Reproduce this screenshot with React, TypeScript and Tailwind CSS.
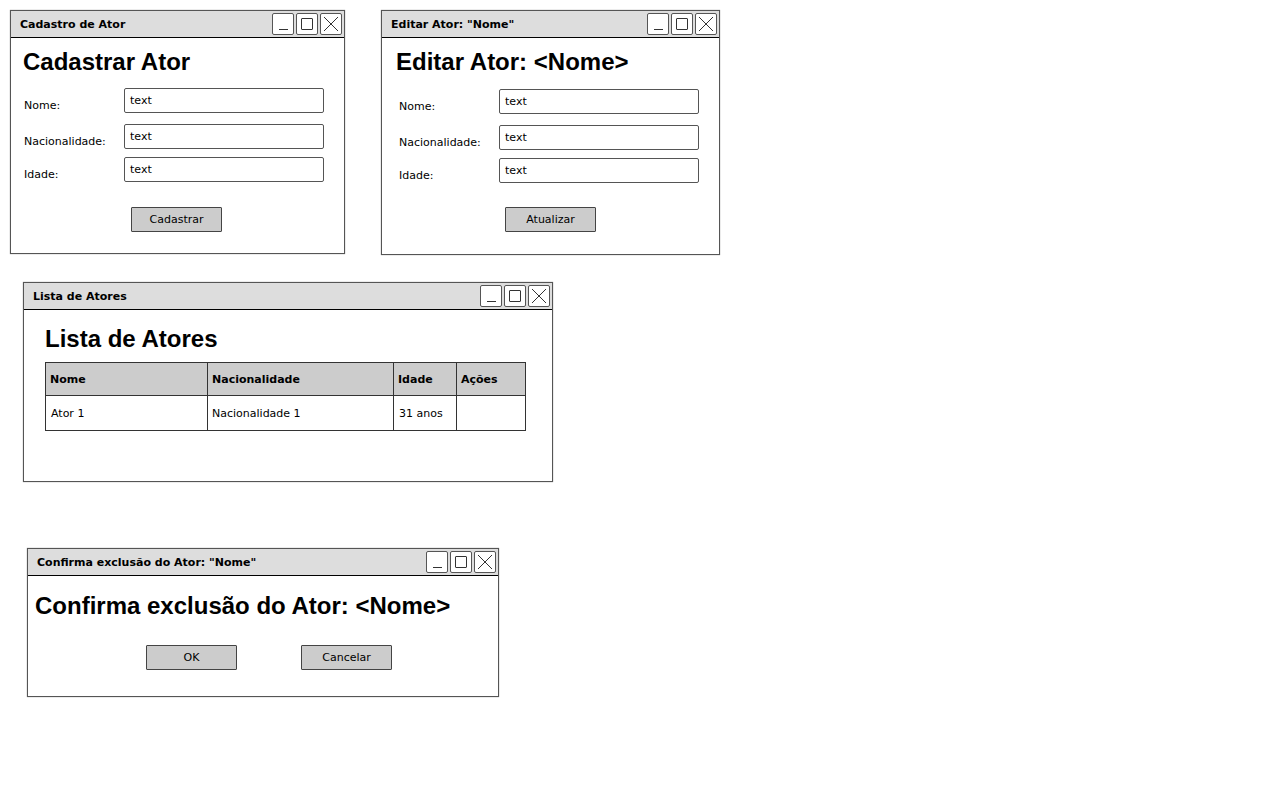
import { FC, ReactNode } from "react";

const sketch = "[font-family:'Comic_Sans_MS','DejaVu_Sans',sans-serif]";
const heading = "[font-family:'Liberation_Sans',Arial,sans-serif] font-bold text-[24px] leading-[28px] text-black";

interface WindowProps {
  title: string;
  className?: string;
  children: ReactNode;
}

const WindowFrame: FC<WindowProps> = ({ title, className, children }) => {
  return (
    <div className={`absolute flex flex-col bg-white border-[1.5px] border-[#555] shadow-[0_0_1px_#888] ${className ?? ""}`}>
      <div className="flex items-center justify-between h-[27px] bg-[#dddddd] border-b border-black pl-[9px] pr-[2px] shrink-0">
        <span className={`${sketch} text-[11px] font-bold text-black pt-[2px]`}>{title}</span>
        <div className="flex gap-[2px]">
          <div className="w-[22px] h-[22px] border border-[#555] rounded-[2px] bg-white flex items-end justify-center pb-[4px]">
            <div className="w-[9px] h-[1px] bg-[#333]" />
          </div>
          <div className="w-[22px] h-[22px] border border-[#555] rounded-[2px] bg-white flex items-center justify-center">
            <div className="w-[12px] h-[12px] border border-[#333] rounded-[1px]" />
          </div>
          <div className="w-[22px] h-[22px] border border-[#555] rounded-[2px] bg-white flex items-center justify-center">
            <svg width="16" height="16" viewBox="0 0 16 16" fill="none" stroke="#333" strokeWidth="1">
              <path d="M1 1 L15 15 M15 1 L1 15" />
            </svg>
          </div>
        </div>
      </div>
      {children}
    </div>
  );
};

const Field: FC<{ label: string; className?: string }> = ({ label, className }) => (
  <div className={`flex items-start h-[25px] ${className ?? ""}`}>
    <span className={`${sketch} text-[11px] leading-[14px] text-black w-[100px] pt-[11px]`}>{label}</span>
    <div className={`${sketch} w-[200px] h-[25px] border-[1.5px] border-[#555] rounded-[2px] bg-white text-[11px] text-black pl-[5px] pt-[5px] leading-[14px]`}>
      text
    </div>
  </div>
);

const SketchButton: FC<{ label: string; className?: string }> = ({ label, className }) => (
  <div
    className={`${sketch} w-[91px] h-[25px] bg-[#cccccc] border-[1.5px] border-[#444] rounded-[1px] flex items-center justify-center text-[11px] text-black pt-[2px] ${className ?? ""}`}
  >
    {label}
  </div>
);

const App: FC = () => {
  return (
    <div className="relative w-[1280px] h-[800px] bg-white overflow-hidden">
      <WindowFrame title="Cadastro de Ator" className="left-[10px] top-[10px] w-[335px] h-[244px]">
        <div className="flex flex-col pl-[13px]">
          <h1 className={`${heading} mt-[10px] -ml-[1px]`}>Cadastrar Ator</h1>
          <Field label="Nome:" className="mt-[12px]" />
          <Field label="Nacionalidade:" className="mt-[11px]" />
          <Field label="Idade:" className="mt-[8px]" />
        </div>
        <div className="flex justify-center mt-[25px] pr-[2px]">
          <SketchButton label="Cadastrar" />
        </div>
      </WindowFrame>

      <WindowFrame title={'Editar Ator: "Nome"'} className="left-[381px] top-[10px] w-[339px] h-[245px]">
        <div className="flex flex-col pl-[14px]">
          <h1 className={`${heading} mt-[10px]`}>Editar Ator: &lt;Nome&gt;</h1>
          <div className="pl-[3px]">
            <Field label="Nome:" className="mt-[13px]" />
            <Field label="Nacionalidade:" className="mt-[11px]" />
            <Field label="Idade:" className="mt-[8px]" />
          </div>
        </div>
        <div className="flex justify-center mt-[24px]">
          <SketchButton label="Atualizar" />
        </div>
      </WindowFrame>

      <WindowFrame title="Lista de Atores" className="left-[23px] top-[282px] w-[530px] h-[200px]">
        <div className="flex flex-col pl-[21px]">
          <h1 className={`${heading} mt-[15px]`}>Lista de Atores</h1>
          <table className={`${sketch} mt-[9px] w-[481px] border-collapse text-[11px] text-black`}>
            <thead>
              <tr className="h-[33px] bg-[#cccccc]">
                <th className="w-[162px] border-[1.5px] border-[#333] text-left font-bold pl-[4px] pt-[3px]">Nome</th>
                <th className="w-[186px] border-[1.5px] border-[#333] text-left font-bold pl-[4px] pt-[3px]">Nacionalidade</th>
                <th className="w-[63px] border-[1.5px] border-[#333] text-left font-bold pl-[4px] pt-[3px]">Idade</th>
                <th className="border-[1.5px] border-[#333] text-left font-bold pl-[4px] pt-[3px]">Ações</th>
              </tr>
            </thead>
            <tbody>
              <tr className="h-[35px]">
                <td className="border border-[#333] pl-[5px] pt-[2px]">Ator 1</td>
                <td className="border border-[#333] pl-[4px] pt-[2px]">Nacionalidade 1</td>
                <td className="border border-[#333] pl-[5px] pt-[2px]">31 anos</td>
                <td className="border border-[#333]"></td>
              </tr>
            </tbody>
          </table>
        </div>
      </WindowFrame>

      <WindowFrame title={'Confirma exclusão do Ator: "Nome"'} className="left-[27px] top-[548px] w-[472px] h-[149px]">
        <div className="flex flex-col pl-[7px]">
          <h1 className={`${heading} mt-[16px]`}>Confirma exclusão do Ator: &lt;Nome&gt;</h1>
        </div>
        <div className="flex gap-[64px] pl-[118px] mt-[25px]">
          <SketchButton label="OK" />
          <SketchButton label="Cancelar" />
        </div>
      </WindowFrame>
    </div>
  );
};

export default App;
